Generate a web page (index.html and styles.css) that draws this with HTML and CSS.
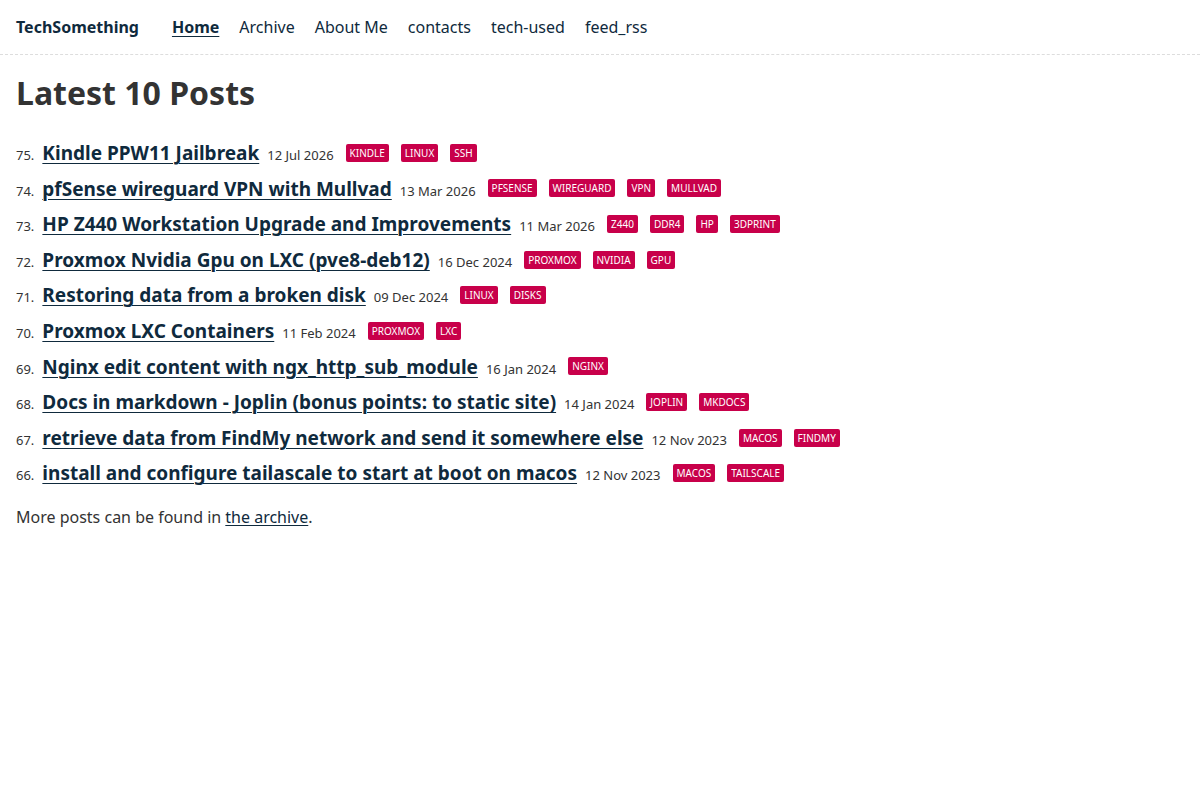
FILE: index.html
```html
<!DOCTYPE html>
<html lang="en">
<head>
<meta charset="utf-8">
<title>TechSomething</title>
<link rel="stylesheet" href="styles.css">
</head>
<body>
<header class="site-header">
  <a class="brand" href="#">TechSomething</a>
  <nav class="nav">
    <a class="nav-link active" href="#">Home</a>
    <a class="nav-link" href="#">Archive</a>
    <a class="nav-link" href="#">About Me</a>
    <a class="nav-link" href="#">contacts</a>
    <a class="nav-link" href="#">tech-used</a>
    <a class="nav-link" href="#">feed_rss</a>
  </nav>
</header>
<main class="content">
  <h1 class="page-title">Latest 10 Posts</h1>
  <ol class="posts">
    <li class="post"><span class="num">75.</span><a class="title" href="#">Kindle PPW11 Jailbreak</a><span class="date">12 Jul 2026</span><span class="tags"><span class="tag">KINDLE</span><span class="tag">LINUX</span><span class="tag">SSH</span></span></li>
    <li class="post"><span class="num">74.</span><a class="title" href="#">pfSense wireguard VPN with Mullvad</a><span class="date">13 Mar 2026</span><span class="tags"><span class="tag">PFSENSE</span><span class="tag">WIREGUARD</span><span class="tag">VPN</span><span class="tag">MULLVAD</span></span></li>
    <li class="post"><span class="num">73.</span><a class="title" href="#">HP Z440 Workstation Upgrade and Improvements</a><span class="date">11 Mar 2026</span><span class="tags"><span class="tag">Z440</span><span class="tag">DDR4</span><span class="tag">HP</span><span class="tag">3DPRINT</span></span></li>
    <li class="post"><span class="num">72.</span><a class="title" href="#">Proxmox Nvidia Gpu on LXC (pve8-deb12)</a><span class="date">16 Dec 2024</span><span class="tags"><span class="tag">PROXMOX</span><span class="tag">NVIDIA</span><span class="tag">GPU</span></span></li>
    <li class="post"><span class="num">71.</span><a class="title" href="#">Restoring data from a broken disk</a><span class="date">09 Dec 2024</span><span class="tags"><span class="tag">LINUX</span><span class="tag">DISKS</span></span></li>
    <li class="post"><span class="num">70.</span><a class="title" href="#">Proxmox LXC Containers</a><span class="date">11 Feb 2024</span><span class="tags"><span class="tag">PROXMOX</span><span class="tag">LXC</span></span></li>
    <li class="post"><span class="num">69.</span><a class="title" href="#">Nginx edit content with ngx_http_sub_module</a><span class="date">16 Jan 2024</span><span class="tags"><span class="tag">NGINX</span></span></li>
    <li class="post"><span class="num">68.</span><a class="title" href="#">Docs in markdown - Joplin (bonus points: to static site)</a><span class="date">14 Jan 2024</span><span class="tags"><span class="tag">JOPLIN</span><span class="tag">MKDOCS</span></span></li>
    <li class="post"><span class="num">67.</span><a class="title" href="#">retrieve data from FindMy network and send it somewhere else</a><span class="date">12 Nov 2023</span><span class="tags"><span class="tag">MACOS</span><span class="tag">FINDMY</span></span></li>
    <li class="post"><span class="num">66.</span><a class="title" href="#">install and configure tailascale to start at boot on macos</a><span class="date">12 Nov 2023</span><span class="tags"><span class="tag">MACOS</span><span class="tag">TAILSCALE</span></span></li>
  </ol>
  <p class="more">More posts can be found in <a href="#">the archive</a>.</p>
</main>
</body>
</html>
```

FILE: styles.css
```css
* { box-sizing: border-box; }
html, body { margin: 0; padding: 0; background: #fff; }
body {
  font-family: "Noto Sans", "Open Sans", sans-serif;
  color: #333;
  font-size: 16px;
}
a { color: #0f2a3d; }

.site-header {
  display: flex;
  align-items: center;
  height: 55px;
  padding: 0 16px;
  border-bottom: 1px dashed #ddd;
}
.brand {
  font-weight: 700;
  text-decoration: none;
  color: #0f2a3d;
  margin-right: 33px;
}
.nav { display: flex; gap: 20px; }
.nav-link { color: #0f2a3d; text-decoration: none; }
.nav-link.active { font-weight: 700; text-decoration: underline; text-underline-offset: 3px; }

.content { padding: 0 16px; }
.page-title {
  font-size: 32px;
  font-weight: 700;
  margin: 20px 0 25px;
  line-height: 36px;
  color: #333;
}
.posts { list-style: none; margin: 0; padding: 0; }
.post {
  display: flex;
  align-items: baseline;
  height: 35.6px;
  line-height: 35.6px;
}
.num { font-size: 13px; color: #333; margin-right: 8px; }
.title {
  font-size: 19px;
  font-weight: 700;
  color: #0f2a3d;
  text-decoration: underline;
  text-underline-offset: 3px;
  text-decoration-thickness: 1px;
}
.date { font-size: 13px; margin-left: 8px; color: #333; }
.tags { display: inline-flex; gap: 12px; margin-left: 12px; align-self: center; position: relative; top: -1px; }
.tag {
  background: #c8004a;
  color: #fff;
  font-size: 10px;
  line-height: 18px;
  padding: 0 4px;
  border-radius: 2px;
}
.more { margin: 13px 0 0; line-height: 24px; }
.more a { color: #0f2a3d; text-underline-offset: 2px; }
```
